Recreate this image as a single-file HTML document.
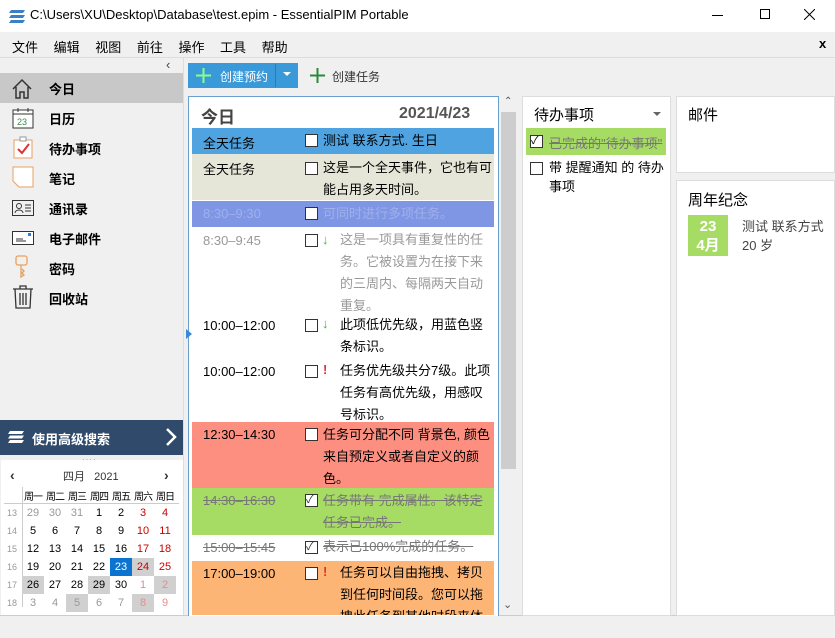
<!DOCTYPE html><html><head><meta charset="utf-8"><style>
*{box-sizing:border-box;margin:0;padding:0}
body{width:835px;height:638px;overflow:hidden;background:#f0f0f0;font-family:"Liberation Sans","Noto Sans CJK SC",sans-serif;font-size:13px;color:#000;position:relative}
.a{position:absolute}
.cb{position:absolute;width:13px;height:13px;border:1px solid #333;background:#fff}
.row{position:absolute;left:192px;width:302px}
.t{position:absolute;left:11px;top:5px;font-size:13px}
.x{position:absolute;line-height:22px}
.st .t,.st .x{text-decoration:line-through}
.nav{position:absolute;left:0;width:183px;height:30px}
.nav span{position:absolute;left:49px;top:6px;font-weight:bold;font-size:13px}
.cal{table-layout:fixed}
.cal td{width:22px;height:18px;text-align:center;font-size:11px;padding:0;overflow:hidden;white-space:nowrap}
.g{color:#999}.r{color:#c00}.s{background:#d0d0d0}
</style></head><body>
<!-- title -->
<div class="a" style="left:0;top:0;width:835px;height:32px;background:#fff"></div>
<svg class="a" style="left:8px;top:8px" width="18" height="16"><g fill="#3b7fc4"><path d="M3 2h14l-2 3H1z"/><path d="M3 7h14l-2 3H1z"/><path d="M3 12h14l-2 3H1z"/></g></svg>
<div class="a" style="left:30px;top:7px;font-size:13px">C:\Users\XU\Desktop\Database\test.epim - EssentialPIM Portable</div>
<div class="a" style="left:712px;top:15px;width:11px;height:1px;background:#000"></div>
<div class="a" style="left:760px;top:9px;width:10px;height:10px;border:1px solid #000"></div>
<svg class="a" style="left:804px;top:9px" width="11" height="11"><path d="M0 0L11 11M11 0L0 11" stroke="#000" stroke-width="1"/></svg>
<!-- menu -->
<div class="a" style="left:12px;top:37px;word-spacing:12px">文件 编辑 视图 前往 操作 工具 帮助</div>
<div class="a" style="left:819px;top:36px;font-weight:bold">x</div>
<div class="a" style="left:0;top:57px;width:835px;height:1px;background:#ddd"></div>
<!-- sidebar -->
<div class="a" style="left:166px;top:57px;font-size:13px;color:#444">‹</div>
<div class="nav" style="top:73px;background:#c8c8c8"><span>今日</span></div>
<svg class="a" style="left:11px;top:78px" width="22" height="22" fill="none" stroke="#333" stroke-width="1.5"><path d="M2 11L11 2l9 9M5 9v11h4v-6h4v6h4V9"/></svg>
<div class="nav" style="top:103px"><span>日历</span></div>
<svg class="a" style="left:12px;top:107px" width="22" height="22"><rect x="1" y="3" width="20" height="18" fill="#fff" stroke="#333"/><path d="M1 7h20M6 1v4M16 1v4" stroke="#333"/><text x="5" y="18" font-size="9" fill="#3a8a4a" font-family="Liberation Sans">23</text></svg>
<div class="nav" style="top:133px"><span>待办事项</span></div>
<svg class="a" style="left:13px;top:136px" width="22" height="24"><rect x="1" y="4" width="18" height="18" fill="#fff" stroke="#e8a060"/><path d="M5 13l4 4 7-9" stroke="#d33" stroke-width="2" fill="none"/><rect x="7" y="1" width="6" height="4" fill="#fff" stroke="#999"/></svg>
<div class="nav" style="top:163px"><span>笔记</span></div>
<svg class="a" style="left:12px;top:166px" width="22" height="22"><path d="M1 1h20v20H7l-6-6z" fill="#fff" stroke="#e8a060"/></svg>
<div class="nav" style="top:193px"><span>通讯录</span></div>
<svg class="a" style="left:12px;top:200px" width="22" height="16" fill="none" stroke="#333"><rect x="0.5" y="0.5" width="21" height="15"/><circle cx="7" cy="6" r="2.5"/><path d="M3 13c0-4 8-4 8 0M13 5h6M13 8h6M13 11h6"/></svg>
<div class="nav" style="top:223px"><span>电子邮件</span></div>
<svg class="a" style="left:12px;top:231px" width="22" height="14"><rect x="0.5" y="0.5" width="21" height="13" fill="#fff" stroke="#333"/><rect x="16" y="2" width="3" height="3" fill="#2a7fd4"/><path d="M4 8h7M4 10h10" stroke="#333"/></svg>
<div class="nav" style="top:253px"><span>密码</span></div>
<svg class="a" style="left:15px;top:255px" width="14" height="24" fill="none" stroke="#e8a060" stroke-width="1.3"><rect x="1" y="1" width="11" height="9" rx="2"/><path d="M6 10v12l3-2-2-2 2-2-2-2"/></svg>
<div class="nav" style="top:283px"><span>回收站</span></div>
<svg class="a" style="left:12px;top:285px" width="22" height="24" fill="none" stroke="#333" stroke-width="1.3"><path d="M1 4h20M8 4V1h6v3M3 4l1 19h14l1-19M8 8v12M11 8v12M14 8v12"/></svg>
<!-- adv search -->
<div class="a" style="left:0;top:420px;width:183px;height:35px;background:#2f4a6b"></div>
<svg class="a" style="left:7px;top:430px" width="18" height="14"><g fill="#fff"><path d="M3 1h14l-2 3H1z"/><path d="M3 5.5h14l-2 3H1z"/><path d="M3 10h14l-2 3H1z"/></g></svg>
<div class="a" style="left:32px;top:429px;color:#fff;font-weight:bold;font-size:13px">使用高级搜索</div>
<svg class="a" style="left:165px;top:428px" width="12" height="18"><path d="M2 1l8 8-8 8" stroke="#fff" stroke-width="2.5" fill="none"/></svg>
<div class="a" style="left:82px;top:455px;font-size:8px;color:#999;letter-spacing:1px">····</div>
<div class="a" style="left:1px;top:460px;width:182px;height:155px;background:#fff"></div>
<div class="a" style="left:10px;top:467px;font-size:14px;color:#333;font-weight:bold">‹</div>
<div class="a" style="left:164px;top:467px;font-size:14px;color:#333;font-weight:bold">›</div>
<div class="a" style="left:63px;top:468px;font-size:11px;color:#333">四月&nbsp;&nbsp;&nbsp;2021</div>
<div class="a" style="left:22px;top:487px;width:1px;height:120px;background:#ccc"></div>
<div class="a" style="left:4px;top:503px;width:175px;height:1px;background:#ccc"></div>
<table class="cal a" style="left:2px;top:486px;border-collapse:collapse;width:174px">
<colgroup><col style="width:20px"><col span="7" style="width:22px"></colgroup>
<tr style="font-size:10px"><td></td><td style="font-size:10px;letter-spacing:-1px">周一</td><td style="font-size:10px;letter-spacing:-1px">周二</td><td style="font-size:10px;letter-spacing:-1px">周三</td><td style="font-size:10px;letter-spacing:-1px">周四</td><td style="font-size:10px;letter-spacing:-1px">周五</td><td style="font-size:10px;letter-spacing:-1px">周六</td><td style="font-size:10px;letter-spacing:-1px">周日</td></tr>
<tr><td class="g" style="font-size:9px">13</td><td class="g">29</td><td class="g">30</td><td class="g">31</td><td>1</td><td>2</td><td class="r">3</td><td class="r">4</td></tr>
<tr><td class="g" style="font-size:9px">14</td><td>5</td><td>6</td><td>7</td><td>8</td><td>9</td><td class="r">10</td><td class="r">11</td></tr>
<tr><td class="g" style="font-size:9px">15</td><td>12</td><td>13</td><td>14</td><td>15</td><td>16</td><td class="r">17</td><td class="r">18</td></tr>
<tr><td class="g" style="font-size:9px">16</td><td>19</td><td>20</td><td>21</td><td>22</td><td style="background:#0a74d0;color:#fff">23</td><td class="r s">24</td><td class="r">25</td></tr>
<tr><td class="g" style="font-size:9px">17</td><td class="s">26</td><td>27</td><td>28</td><td class="s">29</td><td>30</td><td style="color:#e88">1</td><td class="s" style="color:#e88">2</td></tr>
<tr><td class="g" style="font-size:9px">18</td><td class="g">3</td><td class="g">4</td><td class="g s">5</td><td class="g">6</td><td class="g">7</td><td class="s" style="color:#e88">8</td><td style="color:#e88">9</td></tr>
</table>
<div class="a" style="left:0;top:615px;width:835px;height:1px;background:#ccc"></div>
<div class="a" style="left:183px;top:58px;width:1px;height:557px;background:#ddd"></div>
<!-- toolbar -->
<div class="a" style="left:188px;top:63px;width:110px;height:25px;background:#3a9ad9"></div>
<div class="a" style="left:275px;top:64px;width:1px;height:23px;background:#2a7ab9"></div>
<svg class="a" style="left:196px;top:68px" width="15" height="15"><path d="M7.5 0v15M0 7.5h15" stroke="#8f8" stroke-width="2"/></svg>
<div class="a" style="left:220px;top:68px;color:#fff;font-size:12px">创建预约</div>
<div class="a" style="left:283px;top:72px;border:4px solid transparent;border-top-color:#fff"></div>
<svg class="a" style="left:310px;top:68px" width="15" height="15"><path d="M7.5 0v15M0 7.5h15" stroke="#2a8a3a" stroke-width="2"/></svg>
<div class="a" style="left:332px;top:68px;color:#333;font-size:12px">创建任务</div>
<!-- main -->
<div class="a" style="left:188px;top:96px;width:311px;height:520px;background:#fff;border:1px solid #6a9fd0;border-bottom:none"></div>
<div class="a" style="left:186px;top:329px;border:5px solid transparent;border-left:6px solid #3a8ad9"></div>
<div class="a" style="left:201px;top:103px;font-size:17px;font-weight:bold;color:#444">今日</div>
<div class="a" style="left:399px;top:105px;font-size:16px;font-weight:bold;color:#555">2021/4/23</div>
<div class="row" style="top:128px;height:26px;background:#4fa3e0"><div class="t">全天任务</div><div class="cb" style="left:113px;top:6px"></div><div class="x" style="left:131px;top:2px">测试 联系方式. 生日</div></div>
<div class="row" style="top:154px;height:46px;background:#e6e6d8"><div class="t">全天任务</div><div class="cb" style="left:113px;top:8px"></div><div class="x" style="left:131px;top:3px;width:172px">这是一个全天事件，它也有可能占用多天时间。</div></div>
<div class="row" style="top:201px;height:26px;background:#7f96e4;color:#9fb0ec"><div class="t">8:30–9:30</div><div class="cb" style="left:113px;top:6px"></div><div class="x" style="left:131px;top:2px">可同时进行多项任务。</div></div>
<div class="row" style="top:227px;height:86px;color:#999"><div class="t" style="top:6px">8:30–9:45</div><div class="cb" style="left:113px;top:7px"></div><div class="x" style="left:130px;top:2px;color:#3b3">↓</div><div class="x" style="left:148px;top:2px;width:152px;line-height:22px">这是一项具有重复性的任务。它被设置为在接下来的三周内、每隔两天自动重复。</div></div>
<div class="row" style="top:313px;height:46px"><div class="t" style="top:5px">10:00–12:00</div><div class="cb" style="left:113px;top:6px"></div><div class="x" style="left:130px;top:0;color:#3b3">↓</div><div class="x" style="left:148px;top:1px;width:152px">此项低优先级，用蓝色竖条标识。</div></div>
<div class="row" style="top:359px;height:63px"><div class="t" style="top:5px">10:00–12:00</div><div class="cb" style="left:113px;top:6px"></div><div class="x" style="left:131px;top:0;color:#d33;font-weight:bold">!</div><div class="x" style="left:148px;top:1px;width:152px">任务优先级共分7级。此项任务有高优先级，用感叹号标识。</div></div>
<div class="row" style="top:422px;height:66px;background:#fc8f80"><div class="t">12:30–14:30</div><div class="cb" style="left:113px;top:6px"></div><div class="x" style="left:131px;top:2px;width:170px">任务可分配不同 背景色, 颜色来自预定义或者自定义的颜色。</div></div>
<div class="row st" style="top:488px;height:47px;background:#a6dc64;color:#777"><div class="t">14:30–16:30</div><div class="cb" style="left:113px;top:6px;font-size:11px;line-height:10px;color:#333">✓</div><div class="x" style="left:131px;top:2px;width:170px">任务带有 完成属性。该特定任务已完成。</div></div>
<div class="row st" style="top:535px;height:26px;color:#777"><div class="t">15:00–15:45</div><div class="cb" style="left:113px;top:6px;font-size:11px;line-height:10px;color:#333">✓</div><div class="x" style="left:131px;top:1px">表示已100%完成的任务。</div></div>
<div class="row" style="top:561px;height:54px;background:#fdb576;overflow:hidden"><div class="t">17:00–19:00</div><div class="cb" style="left:113px;top:6px"></div><div class="x" style="left:131px;top:0;color:#d33;font-weight:bold">!</div><div class="x" style="left:148px;top:1px;width:152px">任务可以自由拖拽、拷贝到任何时间段。您可以拖拽此任务到其他时段来体验。</div></div>
<!-- scrollbar -->
<div class="a" style="left:500px;top:96px;width:17px;height:519px;background:#f0f0f0"></div>
<div class="a" style="left:501px;top:112px;width:15px;height:357px;background:#cdcdcd"></div>
<div class="a" style="left:504px;top:96px;font-size:10px;color:#555">⌃</div>
<div class="a" style="left:503px;top:598px;font-size:11px;color:#555">⌄</div>
<!-- todo -->
<div class="a" style="left:522px;top:96px;width:149px;height:520px;background:#fff;border:1px solid #ddd"></div>
<div class="a" style="left:534px;top:104px;font-size:15px">待办事项</div>
<div class="a" style="left:653px;top:112px;border:4px solid transparent;border-top-color:#666"></div>
<div class="a" style="left:526px;top:128px;width:140px;height:27px;background:#a6dc64"></div>
<div class="cb" style="left:530px;top:135px;font-size:11px;line-height:10px">✓</div>
<div class="a" style="left:549px;top:133px;color:#777;text-decoration:line-through;font-size:13px">已完成的"待办事项"</div>
<div class="cb" style="left:530px;top:162px"></div>
<div class="a" style="left:549px;top:158px;width:118px;line-height:19px">带 提醒通知 的 待办事项</div>
<!-- mail -->
<div class="a" style="left:676px;top:96px;width:159px;height:77px;background:#fff;border:1px solid #ddd"></div>
<div class="a" style="left:688px;top:104px;font-size:15px">邮件</div>
<div class="a" style="left:676px;top:180px;width:159px;height:436px;background:#fff;border:1px solid #ddd"></div>
<div class="a" style="left:688px;top:189px;font-size:15px">周年纪念</div>
<div class="a" style="left:688px;top:215px;width:40px;height:41px;background:#a6dc64;color:#fff;font-weight:bold;text-align:center;font-size:15px;line-height:19px;padding-top:2px">23<br>4月</div>
<div class="a" style="left:742px;top:217px;color:#444;line-height:19px">测试 联系方式<br>20 岁</div>
</body></html>
